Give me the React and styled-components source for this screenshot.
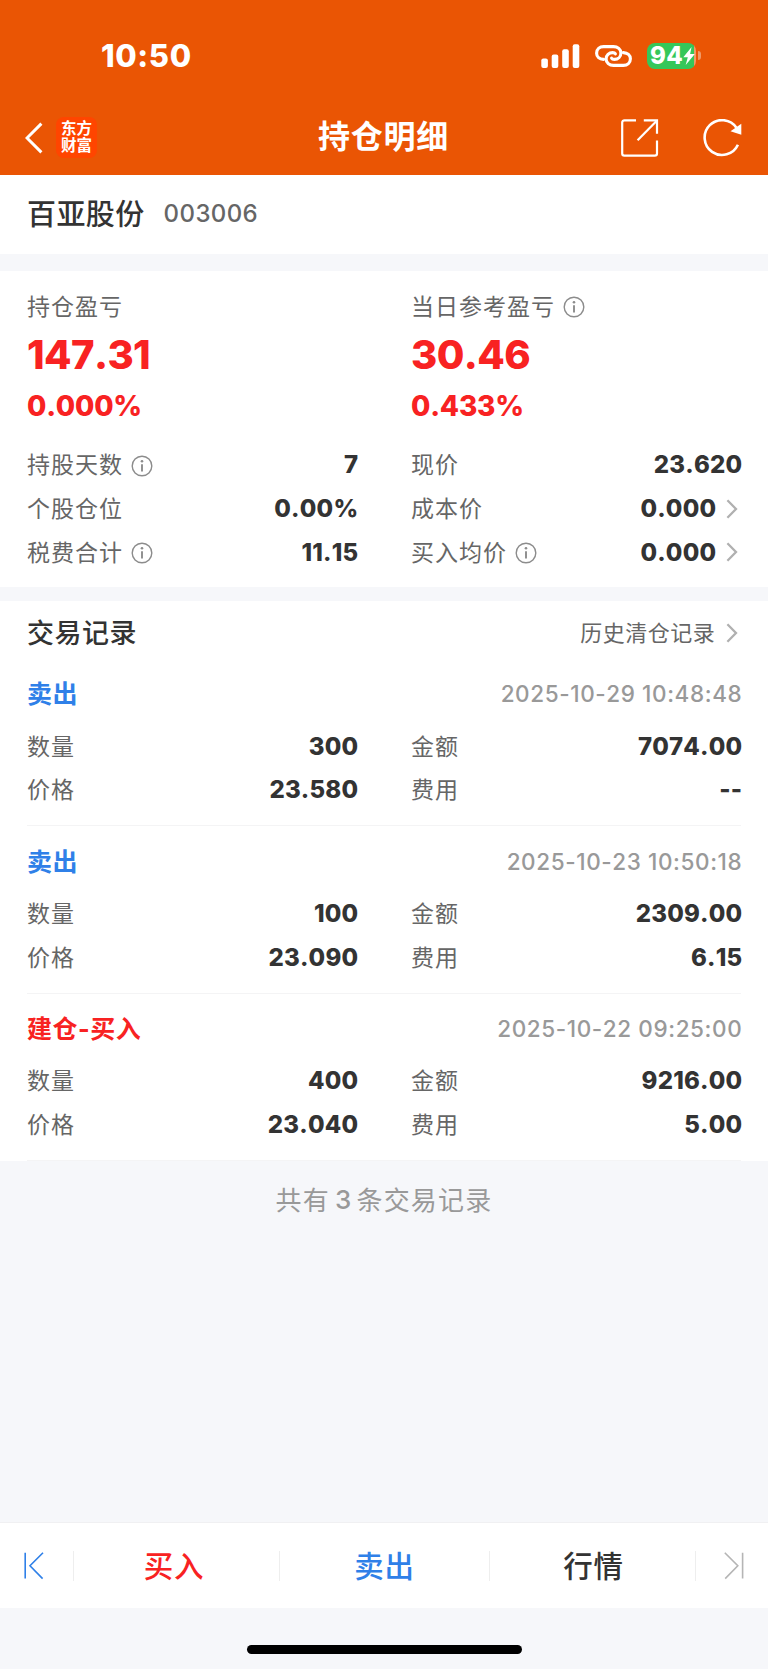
import styled, { createGlobalStyle } from "styled-components";

const GlobalStyle = createGlobalStyle`
  * {
    box-sizing: border-box;
  }
  body {
    margin: 0;
    background: #f6f7fa;
    color: #333;
    font-family: Inter, "Noto Sans CJK SC", sans-serif;
    font-kerning: none;
  }
`;

const holdingRows = [
  { label: "持股天数", info: true, value: "7" },
  { label: "现价", value: "23.620" },
  { label: "个股仓位", value: "0.00%" },
  { label: "成本价", value: "0.000", link: true },
  { label: "税费合计", info: true, value: "11.15" },
  { label: "买入均价", info: true, value: "0.000", link: true },
];

const records = [
  {
    type: "卖出",
    time: "2025-10-29 10:48:48",
    amount: "300",
    total: "7074.00",
    price: "23.580",
    fee: "--",
  },
  {
    type: "卖出",
    time: "2025-10-23 10:50:18",
    amount: "100",
    total: "2309.00",
    price: "23.090",
    fee: "6.15",
  },
  {
    type: "建仓-买入",
    buy: true,
    time: "2025-10-22 09:25:00",
    amount: "400",
    total: "9216.00",
    price: "23.040",
    fee: "5.00",
  },
];

const InfoIcon = () => (
  <svg width="22" height="22" viewBox="0 0 22 22" fill="none">
    <circle cx="11" cy="11" r="9.8" stroke="#8c8c8c" strokeWidth="1.4" />
    <circle cx="11" cy="6.2" r="1.3" fill="#8c8c8c" />
    <path d="M11 9.3V16.6" stroke="#8c8c8c" strokeWidth="1.9" />
  </svg>
);

const Chevron = () => (
  <svg width="12" height="20" viewBox="0 0 12 20" fill="none">
    <path d="M1.4 1.2L10 10L1.4 18.8" stroke="#b0b0b0" strokeWidth="2.3" />
  </svg>
);

const Signal = () => (
  <svg width="39" height="24" viewBox="0 0 39 24" fill="#fff">
    <rect x="0.3" y="14.6" width="6.6" height="9.4" rx="2" />
    <rect x="10.7" y="10.6" width="6.6" height="13.4" rx="2" />
    <rect x="21.2" y="5.3" width="6.6" height="18.7" rx="2" />
    <rect x="31.7" y="0.2" width="6.6" height="23.8" rx="2" />
  </svg>
);

const LinkIcon = () => (
  <svg width="37" height="22" viewBox="0 0 37 22" fill="none">
    <g stroke="#fff" strokeWidth="3.1" strokeLinecap="round">
      <path d="M8.6 14.4C4.4 14.2 1.6 11.8 1.6 8.2C1.6 4.3 4.6 1.6 8.6 1.6H18.5C22.7 1.6 25.9 4.4 25.9 8C25.9 11.8 23 14.4 19.4 14.4C17.9 14.4 17 13.9 16.6 13.2" />
      <path d="M28.4 7.6C32.6 7.8 35.4 10.2 35.4 13.8C35.4 17.7 32.4 20.4 28.4 20.4H18.5C14.3 20.4 11.1 17.6 11.1 14C11.1 10.2 14 7.6 17.6 7.6C19.1 7.6 20 8.1 20.4 8.8" />
    </g>
  </svg>
);

const Bolt = () => (
  <svg width="12" height="18" viewBox="0 0 12 18" fill="#fff">
    <path d="M8.6 0L0.3 10.2H4.8L2.7 18L11.8 7H7.1Z" />
  </svg>
);

const ShareIcon = () => (
  <svg width="38" height="38" viewBox="0 0 38 38" fill="none">
    <g stroke="#fff" strokeWidth="2.2">
      <path d="M15 1.4H3.4Q1.2 1.4 1.2 3.6V34.4Q1.2 36.6 3.4 36.6H33.8Q36 36.6 36 34.4V21.5" />
      <path d="M22.8 1.4H36V14.8" />
      <path d="M16.6 21.2L35.8 1.8" />
    </g>
  </svg>
);

const RefreshIcon = () => (
  <svg width="39" height="38" viewBox="0 0 39 38" fill="none">
    <path
      d="M34.9 25.7A17.4 17.4 0 1 1 33.4 8.7"
      stroke="#fff"
      strokeWidth="2.6"
    />
    <path d="M38.3 4.7V15.7L27.5 12.2Z" fill="#fff" />
  </svg>
);

const Cell = ({ label, info, value, link }) => (
  <Row>
    <Label>
      {label}
      {info && <InfoIcon />}
    </Label>
    <Value>
      {value}
      {link && <Chevron />}
    </Value>
  </Row>
);

const Record = ({ record }) => (
  <RecordBox>
    <RecordHead>
      <RecordType $buy={record.buy}>{record.type}</RecordType>
      <Time>{record.time}</Time>
    </RecordHead>
    <Columns>
      <Cell label="数量" value={record.amount} />
      <Cell label="金额" value={record.total} />
      <Cell label="价格" value={record.price} />
      <Cell label="费用" value={record.fee} />
    </Columns>
  </RecordBox>
);

const App = () => {
  return (
    <>
      <GlobalStyle />
      <Page>
        <Header>
          <StatusBar>
            <Clock>10:50</Clock>
            <StatusIcons>
              <Signal />
              <LinkIcon />
              <BatteryBox>
                <Battery>
                  94
                  <Bolt />
                </Battery>
                <BatteryCap />
              </BatteryBox>
            </StatusIcons>
          </StatusBar>
          <NavBar>
            <NavSide>
              <svg width="18" height="32" viewBox="0 0 18 32" fill="none">
                <path d="M16.4 1.6L2 16L16.4 30.4" stroke="#fff" strokeWidth="3" />
              </svg>
              <Logo>
                <span>东方</span>
                <span>财富</span>
              </Logo>
            </NavSide>
            <Title>持仓明细</Title>
            <NavSide $end>
              <ShareIcon />
              <RefreshIcon />
            </NavSide>
          </NavBar>
        </Header>

        <Stock>
          <StockName>百亚股份</StockName>
          <StockCode>003006</StockCode>
        </Stock>

        <Summary>
          <Columns>
            <div>
              <ProfitLabel>持仓盈亏</ProfitLabel>
              <Profit>147.31</Profit>
              <Percent>0.000%</Percent>
            </div>
            <div>
              <ProfitLabel>
                当日参考盈亏
                <InfoIcon />
              </ProfitLabel>
              <Profit>30.46</Profit>
              <Percent>0.433%</Percent>
            </div>
          </Columns>
          <Details>
            {holdingRows.map((row) => (
              <Cell key={row.label} {...row} />
            ))}
          </Details>
        </Summary>

        <Records>
          <RecordsHead>
            <RecordsTitle>交易记录</RecordsTitle>
            <History>
              历史清仓记录
              <Chevron />
            </History>
          </RecordsHead>
          {records.map((record) => (
            <Record key={record.time} record={record} />
          ))}
        </Records>

        <Total>
          共有<b>3</b>条交易记录
        </Total>

        <TabBar>
          <Arrow>
            <svg width="20" height="28" viewBox="0 0 20 28" fill="none">
              <path d="M1.2 0.8V26.6M19 0.8L6 13.8L18.6 26.6" stroke="#2f80e8" strokeWidth="1.6" />
            </svg>
          </Arrow>
          <Tab $color="#f82222" $pad="0 5px 4px 0">
            买入
          </Tab>
          <Tab $color="#2f80e8">卖出</Tab>
          <Tab $color="#333" $pad="0 0 4px 2px">
            行情
          </Tab>
          <Arrow $end>
            <svg width="20" height="28" viewBox="0 0 20 28" fill="none">
              <path d="M18.6 0.8V26.6M0.8 0.8L13.8 13.8L1.2 26.6" stroke="#b5b5b5" strokeWidth="1.6" />
            </svg>
          </Arrow>
        </TabBar>
        <HomeArea>
          <HomeIndicator />
        </HomeArea>
      </Page>
    </>
  );
};

export default App;

const Page = styled.div`
  width: 768px;
  height: 1669px;
  display: flex;
  flex-direction: column;
  overflow: hidden;
`;

const Header = styled.header`
  height: 175px;
  background: #ea5504;
  color: #fff;
`;

const StatusBar = styled.div`
  height: 100px;
  padding: 11px 67px 0 101px;
  display: flex;
  align-items: center;
  justify-content: space-between;
`;

const Clock = styled.div`
  font-size: 31px;
  font-weight: 800;
  line-height: 40px;
  letter-spacing: 0.6px;
`;

const StatusIcons = styled.div`
  display: flex;
  align-items: center;
  gap: 15px;
`;

const BatteryBox = styled.div`
  display: flex;
  align-items: center;
  gap: 2px;
`;

const Battery = styled.div`
  width: 49px;
  height: 26px;
  padding-left: 3px;
  display: flex;
  align-items: center;
  border-radius: 8px;
  background: linear-gradient(to right, #35c759 47px, #f09a68 47px);
  font-size: 24px;
  font-weight: 800;
  letter-spacing: 0.4px;
`;

const BatteryCap = styled.div`
  width: 3px;
  height: 9px;
  border-radius: 0 4px 4px 0;
  background: #f09a68;
`;

const NavBar = styled.div`
  height: 75px;
  padding: 0 26px 0 25px;
  display: grid;
  grid-template-columns: 1fr auto 1fr;
  align-items: center;
`;

const NavSide = styled.div`
  display: flex;
  align-items: center;
  justify-content: ${(props) => (props.$end ? "flex-end" : "flex-start")};
  gap: ${(props) => (props.$end ? "44px" : "13px")};
`;

const Logo = styled.div`
  width: 41px;
  height: 41px;
  padding-bottom: 2px;
  display: flex;
  flex-direction: column;
  align-items: center;
  justify-content: center;
  border-radius: 8px;
  background: #ff4500;
  font-size: 15.5px;
  font-weight: 700;
  line-height: 17px;
`;

const Title = styled.h1`
  margin: 0;
  padding-bottom: 7px;
  font-size: 32px;
  font-weight: 700;
  letter-spacing: 0.8px;
`;

const Stock = styled.div`
  height: 79px;
  padding: 0 27px 2px;
  display: flex;
  align-items: center;
  background: #fff;
`;

const StockName = styled.div`
  padding-bottom: 4px;
  font-size: 29px;
  font-weight: 500;
  letter-spacing: 0.4px;
`;

const StockCode = styled.div`
  margin-left: 19px;
  color: #666;
  font-size: 24px;
  font-weight: 500;
  letter-spacing: 0.4px;
`;

const Summary = styled.section`
  height: 316px;
  margin-top: 17px;
  padding: 18px 27px 0;
  background: #fff;
`;

const Columns = styled.div`
  display: grid;
  grid-template-columns: 330px 330px;
  column-gap: 54px;
`;

const Details = styled(Columns)`
  margin-top: 17px;
`;

const Label = styled.div`
  padding-bottom: 3px;
  display: flex;
  align-items: center;
  gap: 8px;
  color: #666;
  font-size: 23px;
  letter-spacing: 1px;

  svg {
    margin-top: 5px;
  }
`;

const ProfitLabel = styled(Label)`
  height: 35px;

  svg {
    margin-top: 3px;
  }
`;

const Profit = styled.div`
  color: #f82222;
  font-size: 40px;
  font-weight: 800;
  line-height: 62px;
  letter-spacing: -0.6px;
`;

const Percent = styled.div`
  color: #f82222;
  font-size: 28px;
  font-weight: 800;
  line-height: 40px;
  letter-spacing: -0.2px;
`;

const Row = styled.div`
  height: 43.7px;
  display: flex;
  align-items: center;
  justify-content: space-between;
`;

const Value = styled.div`
  margin-right: -1.3px;
  display: flex;
  align-items: center;
  gap: 10px;
  font-size: 24px;
  font-weight: 800;
  letter-spacing: 0.2px;

  svg {
    margin-right: 4px;
  }
`;

const Records = styled.section`
  height: 560px;
  margin-top: 14px;
  padding: 6px 27px 0;
  background: #fff;
`;

const RecordsHead = styled.div`
  height: 52px;
  display: flex;
  align-items: center;
  justify-content: space-between;
`;

const RecordsTitle = styled.h2`
  margin: 0;
  padding-bottom: 4px;
  font-size: 27px;
  font-weight: 500;
  letter-spacing: 0.5px;
`;

const History = styled.div`
  margin-right: -1.3px;
  padding-bottom: 4px;
  display: flex;
  align-items: center;
  gap: 11px;
  color: #666;
  font-size: 22px;
  letter-spacing: 0.5px;

  svg {
    margin: 3px 4px 0 0;
  }
`;

const RecordBox = styled.div`
  height: 167.3px;
  padding-top: 4.8px;
  border-bottom: 1px solid #f4f4f5;
`;

const RecordHead = styled.div`
  height: 60.4px;
  display: flex;
  align-items: center;
  justify-content: space-between;
`;

const RecordType = styled.div`
  padding-bottom: 3px;
  color: ${(props) => (props.$buy ? "#f82222" : "#2f80e8")};
  font-size: 25px;
  font-weight: 700;
  letter-spacing: 0.5px;
`;

const Time = styled.div`
  margin-right: -1.3px;
  color: #999;
  font-size: 22.5px;
  font-weight: 500;
  letter-spacing: 0.6px;
`;

const Total = styled.div`
  margin-top: 16px;
  height: 46px;
  padding-bottom: 4px;
  display: flex;
  align-items: center;
  justify-content: center;
  color: #999;
  font-size: 26px;
  letter-spacing: 1.2px;

  b {
    margin: 2px 4px 0 5px;
    font-weight: 500;
  }
`;

const TabBar = styled.nav`
  height: 86px;
  margin-top: auto;
  display: grid;
  grid-template-columns: 73px 206px 210px 206px 73px;
  align-items: center;
  border-top: 1px solid #f0f0f2;
  background: #fff;
`;

const Arrow = styled.div`
  height: 30px;
  padding: 0 24px;
  display: flex;
  align-items: center;
  justify-content: ${(props) => (props.$end ? "flex-end" : "flex-start")};
  border-left: ${(props) => (props.$end ? "1px solid #eee" : "none")};
`;

const Tab = styled.div`
  height: 30px;
  padding: ${(props) => props.$pad || "0 0 4px"};
  display: flex;
  align-items: center;
  justify-content: center;
  color: ${(props) => props.$color};
  border-left: 1px solid #eee;
  font-size: 29.5px;
  font-weight: 500;
  letter-spacing: 0.7px;
`;

const HomeArea = styled.div`
  height: 61px;
  padding-top: 37px;
`;

const HomeIndicator = styled.div`
  width: 275px;
  height: 9px;
  margin: 0 auto;
  border-radius: 5px;
  background: #000;
`;
